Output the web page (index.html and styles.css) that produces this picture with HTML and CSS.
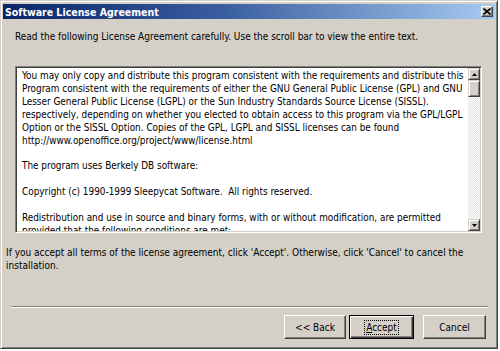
FILE: index.html
```html
<!DOCTYPE html>
<html lang="en">
<head>
  <meta charset="UTF-8" />
  <title>Software License Agreement</title>
  <link rel="stylesheet" href="styles.css">
</head>
<body>
  <div class="window">
    <div class="titlebar">
      <span class="title">Software License Agreement</span>
      <span class="close">
        <svg width="8" height="7" viewBox="0 0 8 7"><path d="M0.5 0.5 L7.5 6.5 M7.5 0.5 L0.5 6.5" stroke="#000" stroke-width="1.6"/></svg>
      </span>
    </div>

    <div class="dialog">
      <p class="intro">Read the following License Agreement carefully. Use the scroll bar to view the entire text.</p>

      <div class="license">
        <div class="license-text">
          <p>You may only copy and distribute this program consistent with the requirements and distribute this<br>
          Program consistent with the requirements of either the GNU General Public License (GPL) and GNU<br>
          Lesser General Public License (LGPL) or the Sun Industry Standards Source License (SISSL).<br>
          respectively, depending on whether you elected to obtain access to this program via the GPL/LGPL<br>
          Option or the SISSL Option. Copies of the GPL, LGPL and SISSL licenses can be found<br>
          http://www.openoffice.org/project/www/license.html</p>
          <p>The program uses Berkely DB software:</p>
          <p>Copyright (c) 1990-1999 Sleepycat Software.&nbsp; All rights reserved.</p>
          <p>Redistribution and use in source and binary forms, with or without modification, are permitted<br>
          provided that the following conditions are met:</p>
        </div>
        <div class="scrollbar">
          <div class="sb-btn">
            <svg width="5" height="3" viewBox="0 0 5 3"><path d="M2.5 0 L5 3 L0 3 Z" fill="#000"/></svg>
          </div>
          <div class="sb-thumb"></div>
          <div class="sb-track"></div>
          <div class="sb-btn">
            <svg width="5" height="3" viewBox="0 0 5 3"><path d="M0 0 L5 0 L2.5 3 Z" fill="#000"/></svg>
          </div>
        </div>
      </div>

      <p class="notice">If you accept all terms of the license agreement, click 'Accept'. Otherwise, click 'Cancel' to cancel the<br>installation.</p>

      <div class="separator"></div>

      <div class="buttons">
        <button class="btn btn-back">&lt;&lt; Back</button>
        <button class="btn btn-default"><span class="focus"><u>A</u>ccept</span></button>
        <button class="btn btn-cancel">Cancel</button>
      </div>
    </div>
  </div>
</body>
</html>
```

FILE: styles.css
```css
body {
  margin: 0;
  background: #fff;
  font-family: "DejaVu Sans Condensed", "DejaVu Sans", sans-serif;
  font-size: 10px;
  color: #000;
}
p {
  margin: 0;
}
.window {
  box-sizing: border-box;
  width: 498px;
  height: 349px;
  padding: 2px;
  background: #d4d0c8;
  border: 1px solid;
  border-color: #d4d0c8 #404040 #404040 #d4d0c8;
  box-shadow: inset 1px 1px #fff, inset -1px -1px #808080;
  display: flex;
  flex-direction: column;
}
.titlebar {
  margin-top: 1px;
  height: 15px;
  display: flex;
  align-items: center;
  justify-content: space-between;
  padding: 0 2px;
  background: linear-gradient(to right, #0a246a, #3a5fa0 45%, #a6caf0);
}
.title {
  color: #fff;
  font-weight: bold;
  font-size: 10.5px;
}
.close {
  box-sizing: border-box;
  width: 12px;
  height: 11px;
  background: #d4d0c8;
  border: 1px solid;
  border-color: #fff #404040 #404040 #fff;
  box-shadow: inset -1px -1px #808080;
  display: flex;
  align-items: center;
  justify-content: center;
}
.dialog {
  flex: 1;
  display: flex;
  flex-direction: column;
}
.intro {
  margin: 11px 0 0 12px;
  line-height: 13px;
}
.license {
  box-sizing: border-box;
  margin: 23px 0 0 12px;
  width: 467px;
  height: 167px;
  display: flex;
  background: #fff;
  border: 1px solid;
  border-color: #808080 #fff #fff #808080;
  box-shadow: inset 1px 1px #404040, inset -1px -1px #d4d0c8;
  padding: 1px;
}
.license-text {
  flex: 1;
  overflow: hidden;
  padding: 2px 0 0 5px;
  font-size: 9.9px;
  line-height: 12.9px;
  white-space: nowrap;
}
.license-text p {
  margin-bottom: 12.9px;
}
.scrollbar {
  width: 12px;
  display: flex;
  flex-direction: column;
}
.sb-btn, .sb-thumb {
  box-sizing: border-box;
  background: #d4d0c8;
  border: 1px solid;
  border-color: #d4d0c8 #404040 #404040 #d4d0c8;
  box-shadow: inset 1px 1px #fff, inset -1px -1px #808080;
}
.sb-btn {
  height: 12px;
  display: flex;
  align-items: center;
  justify-content: center;
}
.sb-thumb {
  height: 17px;
}
.sb-track {
  flex: 1;
  background: repeating-conic-gradient(#fff 0 25%, #e4e1dc 0 50%) 0 0 / 2px 2px;
}
.notice {
  margin: 13px 0 0 3px;
  line-height: 13px;
}
.separator {
  margin: 34px 7px 0 8px;
  height: 1px;
  background: #808080;
  border-bottom: 1px solid #fff;
}
.buttons {
  margin-top: 7px;
  padding-right: 9px;
  display: flex;
  justify-content: flex-end;
}
.btn {
  box-sizing: border-box;
  height: 24px;
  padding: 0;
  font-family: inherit;
  font-size: 10px;
  color: #000;
  background: #d4d0c8;
  border: 1px solid;
  border-color: #fff #404040 #404040 #fff;
  box-shadow: inset -1px -1px #808080;
}
.btn-back {
  width: 62px;
  margin-right: 3px;
}
.btn-default {
  width: 65px;
  margin-right: 9px;
  border: 1px solid #000;
  box-shadow: inset 1px 1px #fff, inset -1px -1px #404040, inset -2px -2px #808080;
}
.btn-cancel {
  width: 63px;
}
.focus {
  padding: 1px 1px;
  outline: 1px dotted #000;
}
```
